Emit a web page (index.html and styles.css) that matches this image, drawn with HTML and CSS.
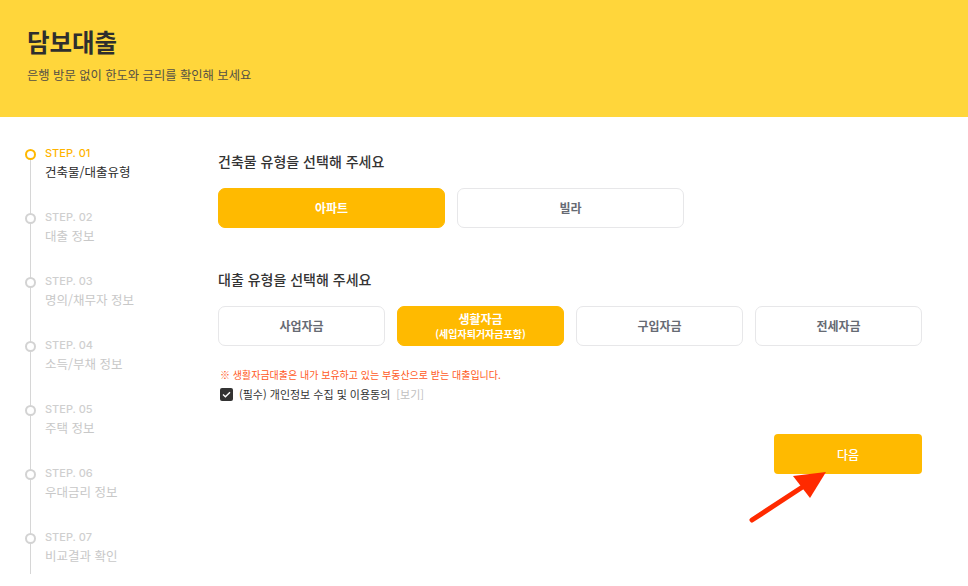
FILE: index.html
```html
<!DOCTYPE html>
<html lang="ko">
	<head>
		<title>담보대출</title>
		<meta name="viewport" content="width=device-width, initial-scale=1" />
		<link rel="stylesheet" href="styles.css">
	</head>
	<body>
		<header class="hero">
			<h1>담보대출</h1>
			<p>은행 방문 없이 한도와 금리를 확인해 보세요</p>
		</header>
		<div class="layout">
			<ol class="steps">
				<li class="step active"><span class="num">STEP. 01</span><span class="name">건축물/대출유형</span></li>
				<li class="step"><span class="num">STEP. 02</span><span class="name">대출 정보</span></li>
				<li class="step"><span class="num">STEP. 03</span><span class="name">명의/채무자 정보</span></li>
				<li class="step"><span class="num">STEP. 04</span><span class="name">소득/부채 정보</span></li>
				<li class="step"><span class="num">STEP. 05</span><span class="name">주택 정보</span></li>
				<li class="step"><span class="num">STEP. 06</span><span class="name">우대금리 정보</span></li>
				<li class="step"><span class="num">STEP. 07</span><span class="name">비교결과 확인</span></li>
			</ol>
			<main class="form">
				<h2>건축물 유형을 선택해 주세요</h2>
				<div class="choices two">
					<button class="choice selected">아파트</button>
					<button class="choice">빌라</button>
				</div>
				<h2 class="second">대출 유형을 선택해 주세요</h2>
				<div class="choices four">
					<button class="choice">사업자금</button>
					<button class="choice selected">생활자금<small>(세입자퇴거자금포함)</small></button>
					<button class="choice">구입자금</button>
					<button class="choice">전세자금</button>
				</div>
				<p class="notice">※ 생활자금대출은 내가 보유하고 있는 부동산으로 받는 대출입니다.</p>
				<label class="agree">
					<span class="box">
						<svg width="9" height="7" viewBox="0 0 9 7"><path d="M1 3.6 L3.4 5.8 L8 1.2" fill="none" stroke="#fff" stroke-width="1.4"/></svg>
					</span>
					(필수) 개인정보 수집 및 이용동의 <span class="view">[보기]</span>
				</label>
				<div class="actions">
					<button class="next">다음</button>
					<svg class="arrow" width="90" height="70" viewBox="0 0 90 70">
						<path d="M4 64 L56 30" stroke="#ff2a00" stroke-width="5" stroke-linecap="round"/>
						<path d="M78 16 L45 20 L62 42 Z" fill="#ff2a00"/>
					</svg>
				</div>
			</main>
		</div>
	</body>
</html>
```

FILE: styles.css
```css
body {
	background: #ffffff;
	color: #333333;
	font-family: "Noto Sans CJK KR", "Noto Sans", sans-serif;
	margin: 0;
}

.hero {
	background: #ffd63b;
	box-sizing: border-box;
	height: 117px;
	padding: 24px 27px 0;
}

.hero h1 {
	font-size: 24.5px;
	font-weight: 700;
	line-height: 36px;
	margin: 0;
	color: #2e2e2e;
}

.hero p {
	color: #555045;
	font-size: 12.3px;
	line-height: 18px;
	margin: 6px 0 0;
}

.layout {
	display: flex;
	padding: 28px 0 0 24px;
}

.steps {
	list-style: none;
	margin: 0;
	padding: 0;
	position: relative;
	width: 194px;
}

.steps::before {
	background: #d6d6d6;
	content: "";
	height: 420px;
	left: 5.5px;
	position: absolute;
	top: 9px;
	width: 1px;
}

.step {
	display: flex;
	flex-direction: column;
	height: 64px;
	padding-left: 21px;
	position: relative;
}

.step::before {
	background: #ffffff;
	border: 2px solid #d3d3d3;
	border-radius: 50%;
	box-sizing: border-box;
	content: "";
	height: 11px;
	left: 1px;
	position: absolute;
	top: 4px;
	width: 11px;
}

.step.active::before {
	border-color: #ffb800;
}

.num {
	color: #cfcfcf;
	font-family: "Inter", "Noto Sans", sans-serif;
	font-size: 11px;
	font-weight: 500;
	line-height: 14px;
	margin-top: 1px;
}

.name {
	color: #c8c8c8;
	font-size: 12.5px;
	line-height: 18px;
	margin-top: 3px;
}

.step.active .num {
	color: #ffb400;
}

.step.active .name {
	color: #2a2a2a;
}

.form {
	width: 704px;
}

.form h2 {
	font-size: 14px;
	font-weight: 500;
	line-height: 20px;
	margin: 6px 0 17px;
	color: #333333;
}

.form h2.second {
	margin-top: 41px;
}

.choices {
	display: flex;
	gap: 12px;
}

.two .choice {
	width: 227px;
	flex: none;
}

.four .choice {
	flex: 1;
}

.choice {
	align-items: center;
	background: #ffffff;
	border: 1px solid #e7e7e9;
	border-radius: 7px;
	color: #666a73;
	display: flex;
	flex-direction: column;
	font-family: inherit;
	font-size: 12px;
	font-weight: 700;
	height: 40px;
	justify-content: center;
	line-height: 16px;
	padding: 0;
}

.choice.selected {
	background: #ffba00;
	border-color: #ffba00;
	color: #ffffff;
}

.choice small {
	font-size: 10px;
	line-height: 14px;
}

.notice {
	color: #ff5a1e;
	font-size: 10px;
	line-height: 14px;
	margin: 22px 0 4px 2px;
}

.agree {
	align-items: center;
	color: #333333;
	display: flex;
	font-size: 11px;
	gap: 6px;
	line-height: 16px;
	margin-left: 2px;
}

.box {
	align-items: center;
	background: #333333;
	border-radius: 2px;
	display: flex;
	height: 13px;
	justify-content: center;
	width: 13px;
}

.view {
	color: #c0c0c0;
}

.actions {
	display: flex;
	justify-content: flex-end;
	margin-top: 32px;
	position: relative;
}

.next {
	background: #ffba00;
	border: 0;
	border-radius: 4px;
	color: #ffffff;
	font-family: inherit;
	font-size: 12px;
	font-weight: 500;
	height: 40px;
	width: 148px;
}

.arrow {
	left: 530px;
	position: absolute;
	top: 22px;
}
```
